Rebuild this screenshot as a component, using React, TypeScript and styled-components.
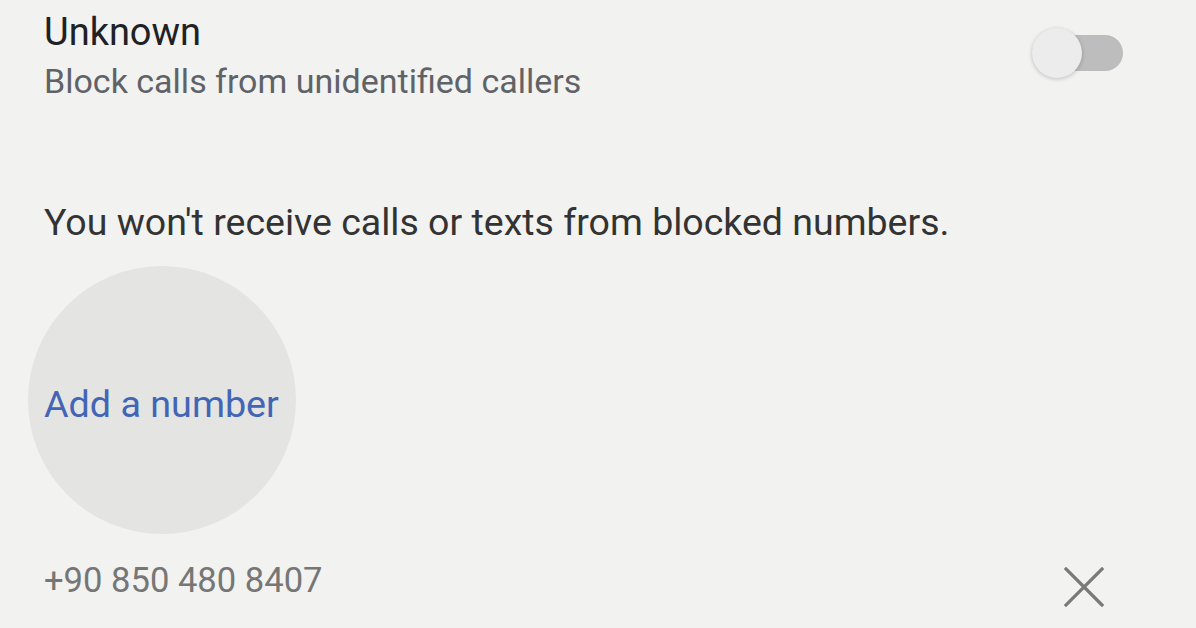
import React, { useState } from "react";
import styled, { createGlobalStyle } from "styled-components";

const GlobalStyle = createGlobalStyle`
  html, body {
    margin: 0;
    padding: 0;
    background: #f2f2f1;
  }
  * {
    box-sizing: border-box;
  }
`;

const Page = styled.div`
  width: 1196px;
  height: 628px;
  overflow: hidden;
  background: #f2f2f1;
  font-family: Roboto, "Noto Sans", Arial, sans-serif;
  padding: 10px 73px 0 44px;
  display: flex;
  flex-direction: column;
`;

const SettingRow = styled.div`
  display: flex;
  justify-content: space-between;
  align-items: flex-start;
`;

const SettingText = styled.div`
  display: flex;
  flex-direction: column;
`;

const Title = styled.div`
  font-size: 38px;
  line-height: 44px;
  color: #202124;
`;

const Subtitle = styled.div`
  margin-top: 7px;
  font-size: 34px;
  line-height: 40px;
  color: #5f6368;
`;

const Track = styled.button<{ on: boolean }>`
  position: relative;
  margin-top: 25px;
  width: 84px;
  height: 36px;
  border: none;
  padding: 0;
  border-radius: 18px;
  background: ${({ on }) => (on ? "#a8c7fa" : "#bdbdbd")};
  cursor: pointer;
`;

const Thumb = styled.span<{ on: boolean }>`
  position: absolute;
  top: -7px;
  left: ${({ on }) => (on ? "34px" : "-7px")};
  width: 50px;
  height: 50px;
  border-radius: 50%;
  background: ${({ on }) => (on ? "#0b57d0" : "#ececec")};
  box-shadow: 0 1px 4px rgba(0, 0, 0, 0.22);
  transition: left 0.15s;
`;

const Notice = styled.p`
  margin: 99px 0 0;
  font-size: 37.5px;
  line-height: 44px;
  color: #333;
`;

const AddButton = styled.button`
  position: relative;
  align-self: flex-start;
  margin-top: 138px;
  padding: 0;
  border: none;
  background: none;
  font-family: inherit;
  font-size: 37.7px;
  line-height: 44px;
  color: #4265b6;
  cursor: pointer;

  &::before {
    content: "";
    position: absolute;
    left: -16px;
    top: -116px;
    width: 268px;
    height: 268px;
    border-radius: 50%;
    background: #e4e4e3;
    z-index: 0;
  }

  span {
    position: relative;
    z-index: 1;
  }
`;

const BlockedRow = styled.div`
  margin-top: 134px;
  display: flex;
  justify-content: space-between;
  align-items: flex-start;
`;

const Number = styled.div`
  font-size: 34.6px;
  line-height: 40px;
  color: #767676;
`;

const RemoveButton = styled.button`
  margin-right: 17px;
  margin-top: 5px;
  width: 44px;
  height: 44px;
  padding: 0;
  border: none;
  background: none;
  display: flex;
  align-items: center;
  justify-content: center;
  cursor: pointer;
`;

const App: React.FC = () => {
  const [blockUnknown, setBlockUnknown] = useState(false);

  return (
    <>
      <GlobalStyle />
      <Page>
        <SettingRow>
          <SettingText>
            <Title>Unknown</Title>
            <Subtitle>Block calls from unidentified callers</Subtitle>
          </SettingText>
          <Track on={blockUnknown} onClick={() => setBlockUnknown(!blockUnknown)} aria-label="Block unknown">
            <Thumb on={blockUnknown} />
          </Track>
        </SettingRow>
        <Notice>You won't receive calls or texts from blocked numbers.</Notice>
        <AddButton>
          <span>Add a number</span>
        </AddButton>
        <BlockedRow>
          <Number>+90 850 480 8407</Number>
          <RemoveButton aria-label="Unblock">
            <svg width="40" height="40" viewBox="0 0 40 40">
              <path d="M2 2 L38 38 M38 2 L2 38" stroke="#7a7a7a" strokeWidth="3.2" strokeLinecap="square" />
            </svg>
          </RemoveButton>
        </BlockedRow>
      </Page>
    </>
  );
};

export default App;
